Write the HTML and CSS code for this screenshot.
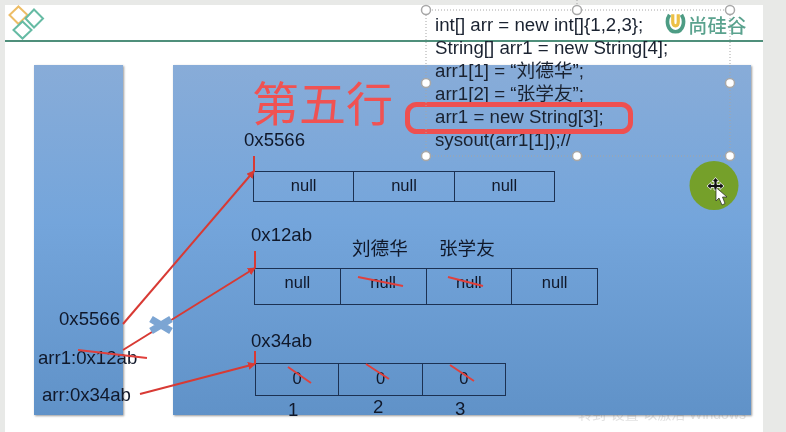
FILE: index.html
```html
<!DOCTYPE html>
<html lang="zh-CN">
<head>
<meta charset="utf-8">
<title>第五行</title>
<link rel="stylesheet" href="styles.css">
</head>
<body>
<main class="slide">
  <header class="slide-header">
    <svg class="brand-mark" viewBox="0 0 50 40" width="50" height="40" aria-hidden="true">
      <path class="diamond-orange" d="M18.500 6.500 27.500 15 18.500 24 9.500 15Z"/>
      <path class="diamond-teal" d="M34 9.500 43 18.500 34 27.500 25.500 18.500Z"/>
      <path class="diamond-teal" d="M22.500 21.500 31.500 30 22.500 38.500 13.500 30Z"/>
    </svg>
  </header>

  <div class="watermark">转到“设置”以激活 Windows</div>
  <section class="panel panel-stack"></section>
  <section class="panel panel-heap"></section>

  <svg class="brand-u" viewBox="0 0 22 24" width="21" height="22" aria-hidden="true">
    <path class="u-ring" d="M4.500 3C0 10 2.500 21.500 11 21.500S22 10 17.500 3"/>
    <path class="u-core" d="M8 2.500V11C8 16.500 14 16.500 14 11V2.500"/>
  </svg>
  <div class="brand-name">尚硅谷</div>

  <div class="title">第五行</div>

  <div class="label addr-a">0x5566</div>
  <div class="label addr-b">0x12ab</div>
  <div class="label addr-c">0x34ab</div>
  <div class="label stack-a">0x5566</div>
  <div class="label stack-b">arr1:0x12ab</div>
  <div class="label stack-c">arr:0x34ab</div>
  <div class="label name-a">刘德华</div>
  <div class="label name-b">张学友</div>
  <div class="label index-a">1</div>
  <div class="label index-b">2</div>
  <div class="label index-c">3</div>

  <div class="cells cells-a"><span>null</span><span>null</span><span>null</span></div>
  <div class="cells cells-b"><span>null</span><span>null</span><span>null</span><span>null</span></div>
  <div class="cells cells-c"><span>0</span><span>0</span><span>0</span></div>

  <pre class="code">int[] arr = new int[]{1,2,3};
String[] arr1 = new String[4];
arr1[1] = “刘德华”;
arr1[2] = “张学友”;
arr1 = new String[3];
sysout(arr1[1]);//</pre>

  <svg class="overlay" viewBox="0 0 786 432" width="786" height="432" aria-hidden="true">
    <defs>
      <marker id="head" viewBox="0 0 8 8" refX="7" refY="4" markerWidth="4" markerHeight="4" orient="auto-start-reverse">
        <path class="arrowhead" d="M0 0 8 4 0 8Z"/>
      </marker>
    </defs>
    <path class="wire" marker-end="url(#head)" d="M123 324 254 171"/>
    <path class="wire" marker-end="url(#head)" d="M123 350 255 268"/>
    <path class="wire" marker-end="url(#head)" d="M140 394 255 364"/>
    <path class="wire" d="M254 156V172M255 251V268M255 351V364"/>
    <path class="strike" d="M78 350 147 358M358 277 403 286M448 277 483 286M288 367 311 383M366 364 389 379M450 365 474 381"/>
    <path class="cross" d="M151 319 171 331M151 331 171 319"/>
    <rect class="highlight" x="407.500" y="104.500" width="223" height="27" rx="9"/>
    <rect class="frame" x="426" y="10" width="304" height="146"/>
    <path class="frame" d="M577 0V10"/>
    <g class="handle">
      <circle cx="426" cy="10" r="4.500"/><circle cx="577" cy="10" r="4.500"/><circle cx="730" cy="10" r="4.500"/>
      <circle cx="426" cy="83" r="4.500"/><circle cx="730" cy="83" r="4.500"/>
      <circle cx="426" cy="156" r="4.500"/><circle cx="577" cy="156" r="4.500"/><circle cx="730" cy="156" r="4.500"/>
    </g>
    <circle class="pointer-halo" cx="714" cy="185.500" r="24.500"/>
    <path class="move-cursor" d="M715.500 177.500 719 181.500H717V184.500H720V182.500L724 186 720 189.500V187.500H717V190H714V187.500H711V189.500L707 186 711 182.500V184.500H714V181.500H712Z"/>
    <path class="arrow-cursor" d="M716 187.500V201L719 198 722 205 725 203.500 722.500 197H727Z"/>
  </svg>
</main>
</body>
</html>
```
FILE: styles.css
```css
* { box-sizing: border-box; }
html, body { margin: 0; height: 100%; }
body {
  background: #e8e9e7;
  overflow: hidden;
  width: 786px;
  height: 432px;
  font-family: "Liberation Sans", "Noto Sans CJK SC", sans-serif;
}
.slide {
  position: relative;
  margin: 5px 0 0 5px;
  width: 758px;
  height: 427px;
  background: #fff;
  filter: blur(0.45px);
}
.slide-header {
  height: 37px;
  border-bottom: 2.500px solid #4f8f7b;
}
.brand-mark {
  position: absolute;
  left: -5px;
  top: -5px;
  overflow: visible;
}
.diamond-orange, .diamond-teal { fill: none; stroke-width: 2; }
.diamond-orange { stroke: #edbd66; }
.diamond-teal { stroke: #66bba4; }

.panel {
  position: absolute;
  top: 60px;
  height: 350px;
  background: linear-gradient(180deg, #88acd8 0%, #74a5db 45%, #6092c8 100%);
  box-shadow: 1px 1px 2px rgba(70, 70, 70, .55);
}
.panel-stack { left: 29px; width: 89px; }
.panel-heap { left: 168px; width: 578px; }
.watermark {
  position: absolute;
  left: 573px;
  top: 400px;
  font-size: 14px;
  line-height: 18px;
  white-space: nowrap;
  color: #e2e2e2;
}

.brand-u { position: absolute; left: 660px; top: 7px; }
.u-ring { fill: none; stroke: #4d9c84; stroke-width: 4; }
.u-core { fill: none; stroke: #ecc046; stroke-width: 3.500; }
.brand-name {
  position: absolute;
  left: 683px;
  top: 9px;
  font-size: 19.500px;
  line-height: 24px;
  font-weight: 500;
  color: #5aa28e;
}

.title {
  position: absolute;
  left: 247px;
  top: 72px;
  font-family: "Noto Sans CJK SC", sans-serif;
  font-size: 47px;
  line-height: 48px;
  font-weight: 400;
  color: #f05252;
}

.label {
  position: absolute;
  font-size: 18.600px;
  line-height: 22px;
  color: #10182a;
  white-space: nowrap;
}
.addr-a { left: 239px; top: 124px; }
.addr-b { left: 246px; top: 219px; }
.addr-c { left: 246px; top: 325px; }
.stack-a { left: 54px; top: 303px; }
.stack-b { left: 33px; top: 342px; }
.stack-c { left: 37px; top: 379px; }
.name-a { left: 347px; top: 233px; }
.name-b { left: 434px; top: 233px; }
.index-a { left: 283px; top: 394px; }
.index-b { left: 368px; top: 391px; }
.index-c { left: 450px; top: 393px; }

.cells {
  position: absolute;
  display: flex;
  border: 1.500px solid #1c3152;
  font-size: 16.500px;
  color: #10182a;
}
.cells span {
  flex: 1 1 0;
  display: flex;
  align-items: center;
  justify-content: center;
  border-left: 1.500px solid #1c3152;
}
.cells span:first-child { border-left: 0; }
.cells-a { left: 248px; top: 166px; width: 302px; height: 31px; }
.cells-a span { padding-bottom: 2px; }
.cells-b { left: 249px; top: 263px; width: 344px; height: 37px; }
.cells-b span { padding-bottom: 8px; }
.cells-c { left: 250px; top: 358px; width: 251px; height: 33px; }
.cells-c span { padding-bottom: 3px; }

.code {
  position: absolute;
  left: 430px;
  top: 8px;
  margin: 0;
  font-family: "Liberation Sans", "Noto Sans CJK SC", sans-serif;
  font-size: 18.700px;
  line-height: 23px;
  color: #1a2230;
}

.overlay { position: absolute; left: -5px; top: -5px; pointer-events: none; }
.wire { fill: none; stroke: #d83a34; stroke-width: 2; }
.arrowhead { fill: #d83a34; }
.strike { fill: none; stroke: #e0403c; stroke-width: 2; }
.cross { fill: none; stroke: #7ca5d3; stroke-width: 7; }
.highlight { fill: none; stroke: #ee5050; stroke-width: 5; }
.frame { fill: none; stroke: #a5a5a5; stroke-width: 1; stroke-dasharray: 1 2; }
.handle circle { fill: #fff; stroke: #a8a8a8; stroke-width: 1.500; }
.pointer-halo { fill: #75a02a; }
.move-cursor { fill: #111; stroke: #fff; stroke-width: .8; }
.arrow-cursor { fill: #fff; stroke: #222; stroke-width: .7; }
```
